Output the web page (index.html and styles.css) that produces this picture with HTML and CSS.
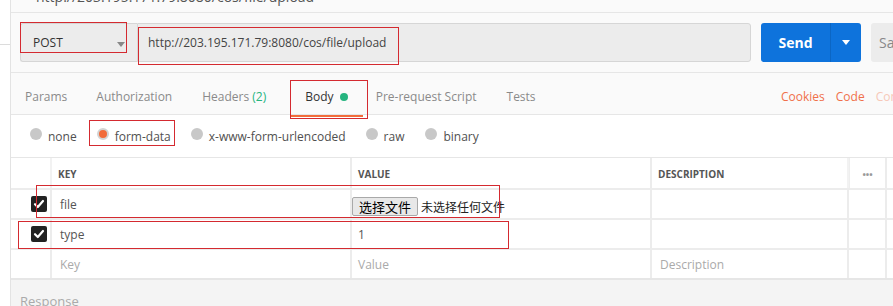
FILE: index.html
```html
<!DOCTYPE html>
<html>
<head>
<meta charset="utf-8">
<link rel="stylesheet" href="styles.css">
</head>
<body>
<div class="app">
  <div class="sidebar"><div class="side-top"></div></div>
  <div class="main">
    <div class="tab-title"><span>http://203.195.171.79:8080/cos/file/upload</span></div>
    <div class="url-row">
      <div class="method">POST<span class="caret"></span></div>
      <div class="url">http://203.195.171.79:8080/cos/file/upload</div>
      <div class="send"><span class="send-label">Send</span><span class="send-drop"><span class="caret white"></span></span></div>
      <div class="save">Sa</div>
    </div>
    <div class="tabs">
      <span class="tab">Params</span>
      <span class="tab">Authorization</span>
      <span class="tab">Headers <span class="green">(2)</span></span>
      <span class="tab active">Body <span class="dot"></span></span>
      <span class="tab">Pre-request Script</span>
      <span class="tab">Tests</span>
      <span class="spacer"></span>
      <div class="links">
        <span class="link">Cookies</span>
        <span class="link">Code</span>
        <span class="link faded">Comments</span>
      </div>
    </div>
    <div class="radios">
      <label class="radio"><span class="circle"></span>none</label>
      <label class="radio"><span class="circle on"></span>form-data</label>
      <label class="radio"><span class="circle"></span>x-www-form-urlencoded</label>
      <label class="radio"><span class="circle"></span>raw</label>
      <label class="radio"><span class="circle"></span>binary</label>
    </div>
    <div class="table">
      <div class="row head">
        <div class="c chk"></div>
        <div class="c key">KEY</div>
        <div class="c val">VALUE</div>
        <div class="c desc">DESCRIPTION</div>
        <div class="c more"><span class="dots">•••</span></div>
        <div class="c end"></div>
      </div>
      <div class="row">
        <div class="c chk"><span class="box"><svg width="12" height="12" viewBox="0 0 12 12"><path d="M2 6.2 L4.8 9 L10 3" fill="none" stroke="#fff" stroke-width="2.2" stroke-linecap="round" stroke-linejoin="round"/></svg></span></div>
        <div class="c key">file</div>
        <div class="c val"><span class="filebtn">选择文件</span><span class="filetext">未选择任何文件</span></div>
        <div class="c desc"></div>
        <div class="c more"></div>
        <div class="c end"></div>
      </div>
      <div class="row">
        <div class="c chk"><span class="box"><svg width="12" height="12" viewBox="0 0 12 12"><path d="M2 6.2 L4.8 9 L10 3" fill="none" stroke="#fff" stroke-width="2.2" stroke-linecap="round" stroke-linejoin="round"/></svg></span></div>
        <div class="c key">type</div>
        <div class="c val">1</div>
        <div class="c desc"></div>
        <div class="c more"></div>
        <div class="c end"></div>
      </div>
      <div class="row last">
        <div class="c chk"></div>
        <div class="c key ph">Key</div>
        <div class="c val ph">Value</div>
        <div class="c desc ph">Description</div>
        <div class="c more"></div>
        <div class="c end"></div>
      </div>
    </div>
    <div class="response">Response</div>
  </div>
</div>
<div class="mark m-method"></div>
<div class="mark m-url"></div>
<div class="mark m-body"></div>
<div class="mark m-form"></div>
<div class="mark m-file"></div>
<div class="mark m-type"></div>
</body>
</html>
```
FILE: styles.css
```css
html, body {
  margin: 0;
  padding: 0;
  height: 306px;
  overflow: hidden;
}
body {
  font-family: "Open Sans", "Noto Sans CJK SC", sans-serif;
  font-size: 12px;
  color: #505050;
  background: #fafafa;
  position: relative;
}
.app {
  display: flex;
  height: 306px;
}
.sidebar {
  width: 10px;
  background: #fff;
  border-right: 1px solid #e3e3e3;
  flex: none;
}
.side-top {
  height: 44px;
  border-bottom: 1px solid #dcdcdc;
}
.main {
  flex: 1;
  min-width: 0;
  display: flex;
  flex-direction: column;
  overflow: hidden;
}
.tab-title {
  height: 12px;
  overflow: hidden;
  border-bottom: 1px solid #e6e6e6;
  padding-left: 25px;
  color: #555;
  font-size: 14px;
  flex: none;
}
.tab-title span {
  display: block;
  line-height: 20px;
  margin-top: -13px;
  white-space: nowrap;
}
.url-row {
  display: flex;
  align-items: stretch;
  height: 39px;
  padding: 10px 0 10px 9px;
  border-bottom: 1px solid #e6e6e6;
  white-space: nowrap;
  overflow: hidden;
  flex: none;
}
.url-row > div { flex: none; }
.method {
  width: 117px;
  box-sizing: border-box;
  background: #ececec;
  border: 1px solid #d6d6d6;
  border-right: none;
  border-radius: 3px 0 0 3px;
  display: flex;
  align-items: center;
  padding: 0 0 0 12px;
  color: #333;
  font-size: 12px;
  position: relative;
}
.caret {
  display: inline-block;
  width: 0;
  height: 0;
  border-left: 4px solid transparent;
  border-right: 4px solid transparent;
  border-top: 5px solid #888;
}
.method .caret {
  position: absolute;
  left: 96px;
  top: 18px;
}
.caret.white { border-top-color: #fff; }
.url {
  width: 614px;
  box-sizing: border-box;
  background: #ececec;
  border: 1px solid #d6d6d6;
  border-radius: 0 3px 3px 0;
  display: flex;
  align-items: center;
  padding-left: 10px;
  color: #444;
  font-size: 12px;
}
.send {
  margin-left: 10px;
  width: 100px;
  background: #0e73dc;
  border-radius: 3px;
  display: flex;
  color: #fff;
  font-weight: 700;
  font-size: 14px;
}
.send-label {
  width: 69px;
  display: flex;
  align-items: center;
  justify-content: center;
  border-right: 1px solid #0b66c4;
}
.send-drop {
  flex: 1;
  display: flex;
  align-items: center;
  justify-content: center;
}
.save {
  margin-left: 10px;
  width: 40px;
  background: #ececec;
  border-radius: 3px 0 0 3px;
  display: flex;
  align-items: center;
  padding-left: 8px;
  color: #888;
  font-size: 14px;
}
.tabs {
  height: 42px;
  display: flex;
  align-items: center;
  border-bottom: 1px solid #e6e6e6;
  padding-left: 14px;
  padding-top: 6px;
  box-sizing: border-box;
  white-space: nowrap;
  flex: none;
}
.tab {
  color: #8a8a8a;
  font-size: 12px;
  margin-right: 29px;
  position: relative;
  flex: none;
}
.tab:nth-child(2) { margin-right: 30px; }
.tab:nth-child(3) { margin-right: 39px; }
.tab:nth-child(4) { margin-right: 28px; }
.tab:nth-child(5) { margin-right: 30px; }
.green { color: #26b47f; }
.tab.active { color: #333; }
.tab.active::after {
  content: "";
  position: absolute;
  left: -15px;
  right: -15px;
  bottom: -12px;
  height: 2px;
  background: #f26b3a;
}
.dot {
  display: inline-block;
  width: 8px;
  height: 8px;
  border-radius: 50%;
  background: #26b47f;
  margin-left: 3px;
  vertical-align: 0;
}
.spacer { flex: 1; }
.links {
  width: 112px;
  flex: none;
  overflow: hidden;
  white-space: nowrap;
  display: flex;
}
.link {
  color: #f0704a;
  font-size: 12px;
  margin-right: 11px;
  flex: none;
}
.link.faded { color: #f7c8b8; }
.radios {
  height: 43px;
  background: #fff;
  border-bottom: 1px solid #e6e6e6;
  display: flex;
  align-items: center;
  padding-left: 19px;
  padding-top: 0;
  box-sizing: border-box;
  white-space: nowrap;
  flex: none;
}
.radio {
  display: flex;
  align-items: center;
  font-size: 12px;
  color: #505050;
  margin-right: 20px;
}
.radio:nth-child(2) { margin-right: 20px; }
.radio:nth-child(3) { margin-right: 20px; }
.radio:nth-child(4) { margin-right: 21px; }
.circle {
  width: 12px;
  height: 12px;
  border-radius: 50%;
  background: #c8c8c8;
  margin-right: 6px;
  margin-top: -5px;
  box-sizing: border-box;
}
.circle.on {
  background: #f26b3a;
  border: 2px solid #d3d3d3;
}
.table {
  background: #fff;
  flex: none;
}
.row {
  display: flex;
  height: 30px;
  border-bottom: 2px solid #ececec;
  box-sizing: border-box;
}
.row.head { height: 32px; }
.row.last { border-bottom: 2px solid #e6e6e6; }
.c {
  box-sizing: border-box;
  display: flex;
  align-items: center;
  border-right: 2px solid #ececec;
  white-space: nowrap;
  overflow: hidden;
  flex: none;
}
.chk { width: 41px; justify-content: flex-end; padding-right: 3px; }
.key { width: 300px; padding-left: 8px; color: #555; }
.val { width: 300px; padding-left: 6px; color: #555; }
.desc { width: 197px; padding-left: 6px; }
.more { width: 38px; justify-content: center; }
.c.end { flex: 1; border-right: none; }
.head .c {
  font-size: 10px;
  font-weight: 700;
  color: #555;
  padding-top: 2px;
}
.head .key { padding-left: 6px; }
.head .chk, .head .desc { border-right-color: #f2f2f2; }
.dots {
  color: #999;
  font-size: 9px;
  letter-spacing: 0;
}
.head .more { border-left: 1px solid #eee; }
.ph { color: #aaa; }
.row .val.ph { color: #aaa; }
.desc.ph { padding-left: 8px; }
.box {
  width: 16px;
  height: 16px;
  border-radius: 2px;
  background: #222;
  display: flex;
  align-items: center;
  justify-content: center;
}
.filebtn {
  font-family: "Noto Sans CJK SC", sans-serif;
  font-size: 13px;
  color: #000;
  background: #e8e8e8;
  border: 1px solid #a9a9a9;
  border-radius: 2px;
  padding: 0 6px;
  height: 19px;
  line-height: 18px;
  margin-left: -6px;
  margin-top: 4px;
  box-sizing: border-box;
}
.filetext {
  font-family: "Noto Sans CJK SC", sans-serif;
  font-size: 12px;
  color: #222;
  margin-left: 3px;
  margin-top: 4px;
}
.response {
  flex: 1;
  background: #f4f4f4;
  padding: 12px 0 0 9px;
  color: #aaa;
  font-size: 13px;
}
.mark {
  position: absolute;
  border: 1px solid #d42a30;
  box-sizing: border-box;
  pointer-events: none;
}
.m-method { left: 20px; top: 22px; width: 107px; height: 31px; }
.m-url { left: 138px; top: 27px; width: 261px; height: 38px; }
.m-body { left: 290px; top: 80px; width: 78px; height: 39px; }
.m-form { left: 89px; top: 120px; width: 86px; height: 26px; }
.m-file { left: 36px; top: 185px; width: 464px; height: 33px; }
.m-type { left: 18px; top: 221px; width: 491px; height: 28px; }
```
